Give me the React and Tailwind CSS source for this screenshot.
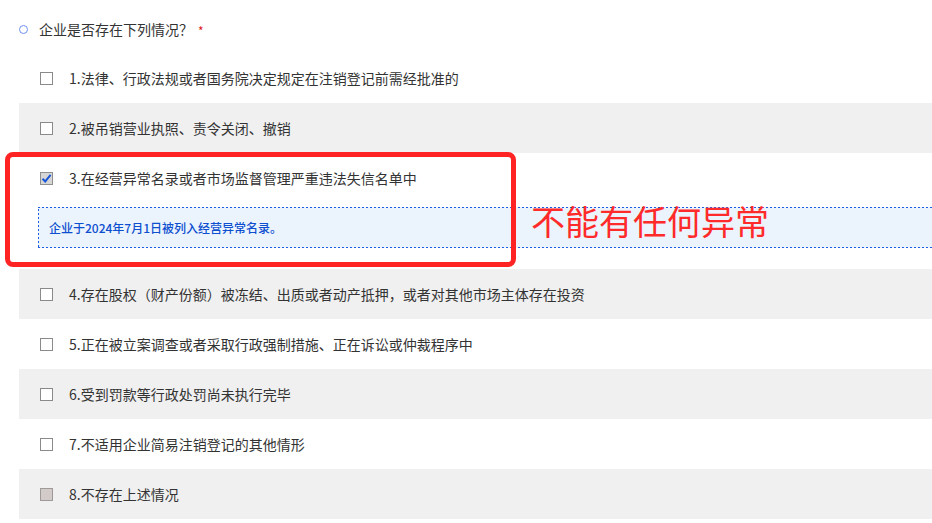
import React from "react";

const items = [
  { t: "1.法律、行政法规或者国务院决定规定在注销登记前需经批准的" },
  { t: "2.被吊销营业执照、责令关闭、撤销", gray: true },
  { t: "3.在经营异常名录或者市场监督管理严重违法失信名单中", checked: true, info: "企业于2024年7月1日被列入经营异常名录。" },
  { t: "4.存在股权（财产份额）被冻结、出质或者动产抵押，或者对其他市场主体存在投资", gray: true },
  { t: "5.正在被立案调查或者采取行政强制措施、正在诉讼或仲裁程序中" },
  { t: "6.受到罚款等行政处罚尚未执行完毕", gray: true },
  { t: "7.不适用企业简易注销登记的其他情形" },
  { t: "8.不存在上述情况", gray: true, disabled: true },
];

function Box({ checked, disabled }) {
  if (checked) {
    return (
      <span className="flex h-[13px] w-[13px] shrink-0 items-center justify-center border border-[#8f8f8f] bg-[#d6d6d6]">
        <svg width="11" height="11" viewBox="0 0 11 11">
          <path d="M1.5 5.8 L4.2 8.5 L9.6 1.8" fill="none" stroke="#1a56d6" strokeWidth="2" />
        </svg>
      </span>
    );
  }
  if (disabled) {
    return <span className="h-[13px] w-[13px] shrink-0 border border-[#9f9a9a] bg-[#d3caca]" />;
  }
  return <span className="h-[13px] w-[13px] shrink-0 border border-[#8a8a8a] bg-white" />;
}

export default function App() {
  return (
    <div
      className="relative h-[523px] w-[932px] overflow-hidden bg-white text-[14px] text-[#333]"
      style={{ fontFamily: '"Noto Sans CJK SC", "Noto Sans", sans-serif' }}
    >
      <div className="flex h-[53px] items-start pt-[19px] pl-[19px]">
        <span className="mt-[6px] h-[9px] w-[9px] rounded-full border border-[#6f8ff0]" />
        <span className="ml-[11px] leading-[20px]">企业是否存在下列情况？</span>
        <span className="ml-[5px] mt-[2px] text-[12px] leading-[20px] text-[#e02020]">*</span>
      </div>
      <div className="ml-[19px]">
        {items.map((it, i) => (
          <div key={i} className={it.gray ? "bg-[#f0f0f0]" : "bg-white"}>
            <div className="flex h-[50px] items-center pl-[21px]">
              <Box checked={it.checked} disabled={it.disabled} />
              <span className="ml-[16px] leading-[20px]">{it.t}</span>
            </div>
            {it.info && (
              <div className="pb-[21px] pl-[19px] pt-[4px]">
                <div className="-mr-[4px] flex h-[41px] items-center bg-[#ebf3fd] bg-[linear-gradient(90deg,#1d5fe0_50%,transparent_50%),linear-gradient(90deg,#1d5fe0_50%,transparent_50%),linear-gradient(0deg,#1d5fe0_50%,transparent_50%)] pl-[11px] text-[12px] font-medium text-[#0d4fcf] [background-position:0_0,0_100%,0_0] [background-repeat:repeat-x,repeat-x,repeat-y] [background-size:4px_1px,4px_1px,1px_4px]">
                  {it.info}
                </div>
              </div>
            )}
          </div>
        ))}
      </div>
      <div className="pointer-events-none absolute left-[5px] top-[152px] h-[115px] w-[511px] rounded-[8px] border-[5px] border-[#ff2323]" />
      <div className="pointer-events-none absolute left-[531px] top-[204px] text-[34px] leading-[34px] text-[#ff2a2a]">
        不能有任何异常
      </div>
    </div>
  );
}
